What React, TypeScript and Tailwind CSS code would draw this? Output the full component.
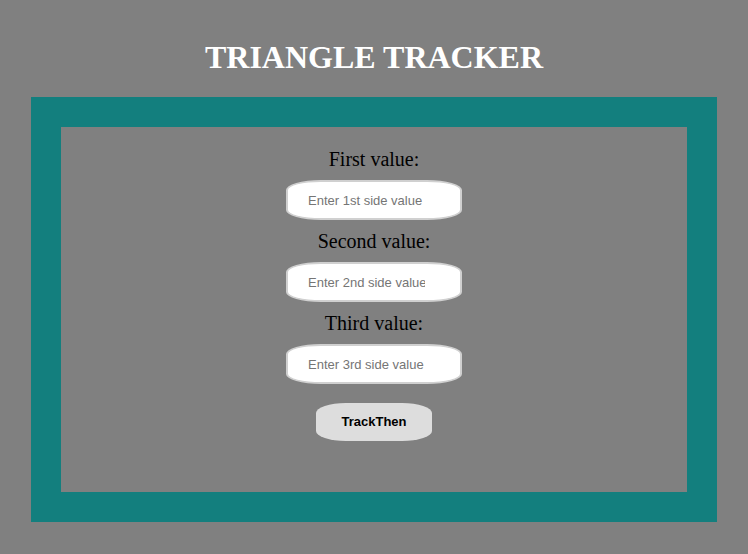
const fields = [
  { label: "First value:", placeholder: "Enter 1st side value" },
  { label: "Second value:", placeholder: "Enter 2nd side value" },
  { label: "Third value:", placeholder: "Enter 3rd side value" },
];

export default function App() {
  return (
    <div className="min-h-[554px] w-[748px] bg-[#808080] pt-[39px] pb-[33px] font-['Liberation_Serif',serif]">
      <h1 className="text-center text-[32px] font-bold leading-[37px] text-white">TRIANGLE TRACKER</h1>

      <div className="mx-[31px] mt-[21px] border-[30px] border-[#137f7e]">
        <div className="flex flex-col items-center bg-[#808080] pt-[21px] pb-[51px]">
          {fields.map((f, i) => (
            <div key={f.label} className={`flex flex-col items-center ${i > 0 ? "mt-[10px]" : ""}`}>
              <label className="text-[20px] leading-[23px] text-black">{f.label}</label>
              <input
                type="text"
                placeholder={f.placeholder}
                className="mt-[9px] h-[40px] w-[176px] rounded-[35px/10px] border-2 border-[#d0d0d0] bg-white pl-[20px] pr-[35px] font-['Liberation_Sans',sans-serif] text-[13px] text-black placeholder:text-[#757575] outline-none"
              />
            </div>
          ))}

          <button
            type="button"
            className="mt-[19px] h-[38px] w-[116px] rounded-[30px/10px] bg-[#dddddd] font-['Liberation_Sans',sans-serif] text-[13px] font-bold text-black"
          >
            TrackThen
          </button>
        </div>
      </div>
    </div>
  );
}
